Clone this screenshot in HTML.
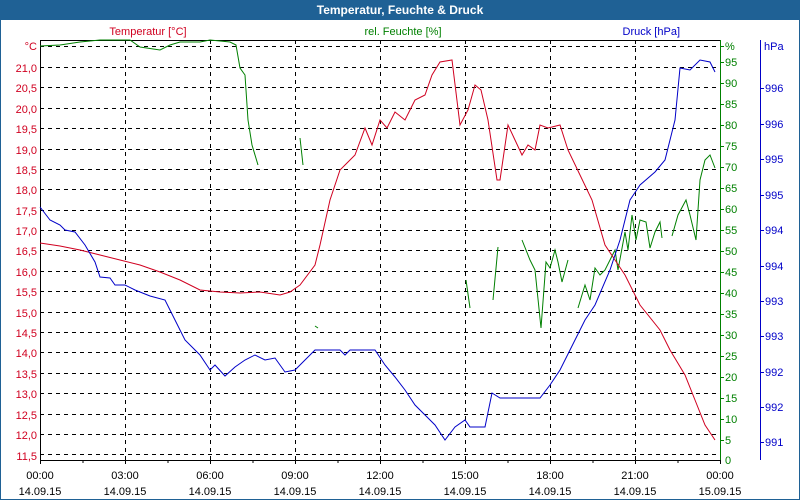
<!DOCTYPE html>
<html><head><meta charset="utf-8"><style>
body{margin:0;background:#fff;width:800px;height:500px;overflow:hidden}
svg{display:block;font-family:"Liberation Sans",sans-serif;font-size:11px}
</style></head><body>
<svg width="800" height="500" viewBox="0 0 800 500">
<rect x="0" y="0" width="800" height="500" fill="#fff"/>
<rect x="0" y="0" width="800" height="20" fill="#1f6195"/>
<rect x="0" y="0" width="1" height="500" fill="#1f6195"/>
<rect x="799" y="0" width="1" height="500" fill="#1f6195"/>
<rect x="0" y="499" width="800" height="1" fill="#1f6195"/>
<text x="400" y="14" text-anchor="middle" fill="#fff" font-weight="bold" font-size="12">Temperatur, Feuchte &amp; Druck</text>
<text x="148" y="35" text-anchor="middle" fill="#d00020">Temperatur [°C]</text>
<text x="403" y="35" text-anchor="middle" fill="#008000">rel. Feuchte [%]</text>
<text x="680" y="35" text-anchor="end" fill="#0000c8">Druck [hPa]</text>
<g stroke="#000" stroke-width="1" stroke-dasharray="4,4" fill="none">
<path d="M40 46.5H720M40 67.5H720M40 87.5H720M40 108.5H720M40 128.5H720M40 149.5H720M40 169.5H720M40 189.5H720M40 210.5H720M40 230.5H720M40 250.5H720M40 271.5H720M40 291.5H720M40 312.5H720M40 332.5H720M40 352.5H720M40 373.5H720M40 393.5H720M40 414.5H720M40 434.5H720M40 454.5H720"/>
<path d="M125.5 40V460M210.5 40V460M295.5 40V460M380.5 40V460M465.5 40V460M550.5 40V460M635.5 40V460"/>
</g>
<g stroke="#000" fill="none">
<path d="M40.5 40V460M40 40.5H720M40 460.5H720"/>
<path d="M40.5 460v4M83 460v3M125.5 460v4M168 460v3M210.5 460v4M253 460v3M295.5 460v4M338 460v3M380.5 460v4M423 460v3M465.5 460v4M508 460v3M550.5 460v4M593 460v3M635.5 460v4M678 460v3M720.5 460v4"/>
</g>
<path d="M720.5 40V460" stroke="#008000"/>
<path d="M720 46.5h4M720 62.5h4M720 83.5h4M720 104.5h4M720 125.5h4M720 146.5h4M720 167.5h4M720 188.5h4M720 209.5h4M720 230.5h4M720 251.5h4M720 272.5h4M720 293.5h4M720 314.5h4M720 335.5h4M720 356.5h4M720 377.5h4M720 398.5h4M720 419.5h4M720 440.5h4" stroke="#008000"/>
<path d="M760.5 40V460M760 88.5h4M760 124.5h4M760 159.5h4M760 195.5h4M760 230.5h4M760 266.5h4M760 301.5h4M760 336.5h4M760 372.5h4M760 407.5h4M760 442.5h4" stroke="#0000c8"/>
<g fill="#d00020" text-anchor="end">
<text x="37" y="50">°C</text><text x="37" y="72">21,0</text><text x="37" y="92">20,5</text><text x="37" y="113">20,0</text><text x="37" y="133">19,5</text><text x="37" y="154">19,0</text><text x="37" y="174">18,5</text><text x="37" y="194">18,0</text><text x="37" y="215">17,5</text><text x="37" y="235">17,0</text><text x="37" y="255">16,5</text><text x="37" y="276">16,0</text><text x="37" y="296">15,5</text><text x="37" y="317">15,0</text><text x="37" y="337">14,5</text><text x="37" y="357">14,0</text><text x="37" y="378">13,5</text><text x="37" y="398">13,0</text><text x="37" y="419">12,5</text><text x="37" y="439">12,0</text><text x="37" y="460">11,5</text>
</g>
<g fill="#008000">
<text x="725" y="50">%</text><text x="725" y="66">95</text><text x="725" y="87">90</text><text x="725" y="108">85</text><text x="725" y="129">80</text><text x="725" y="150">75</text><text x="725" y="171">70</text><text x="725" y="192">65</text><text x="725" y="213">60</text><text x="725" y="234">55</text><text x="725" y="255">50</text><text x="725" y="276">45</text><text x="725" y="297">40</text><text x="725" y="318">35</text><text x="725" y="339">30</text><text x="725" y="360">25</text><text x="725" y="381">20</text><text x="725" y="402">15</text><text x="725" y="423">10</text><text x="725" y="444">5</text><text x="725" y="464">0</text>
</g>
<g fill="#0000c8">
<text x="764" y="50">hPa</text><text x="765" y="92">996</text><text x="765" y="128">996</text><text x="765" y="163">995</text><text x="765" y="199">995</text><text x="765" y="234">994</text><text x="765" y="270">994</text><text x="765" y="305">993</text><text x="765" y="340">993</text><text x="765" y="376">992</text><text x="765" y="411">992</text><text x="765" y="446">991</text>
</g>
<g fill="#000" text-anchor="middle">
<text x="40" y="479">00:00</text><text x="125" y="479">03:00</text><text x="210" y="479">06:00</text><text x="295" y="479">09:00</text><text x="380" y="479">12:00</text><text x="465" y="479">15:00</text><text x="550" y="479">18:00</text><text x="635" y="479">21:00</text><text x="720" y="479">00:00</text>
<text x="40" y="495">14.09.15</text><text x="125" y="495">14.09.15</text><text x="210" y="495">14.09.15</text><text x="295" y="495">14.09.15</text><text x="380" y="495">14.09.15</text><text x="465" y="495">14.09.15</text><text x="550" y="495">14.09.15</text><text x="635" y="495">14.09.15</text><text x="720" y="495">15.09.15</text>
</g>
<g fill="none" stroke-width="1">
<polyline stroke="#008000" points="40,46 60,45 80,42 100,40 130,40 140,47 160,50 170,45 180,42 200,42 210,40 230,42 236,45 240,68 245,75 248,120 252,145 258,165"/>
<polyline stroke="#008000" points="300,138 303,165"/>
<polyline stroke="#008000" points="315,326 318,328"/>
<polyline stroke="#008000" points="466,280 470,308"/>
<polyline stroke="#008000" points="493,300 498,247"/>
<polyline stroke="#008000" points="522,240 530,260 535,270 541,328 546,262 550,268 555,250 558,262 562,282 568,260"/>
<polyline stroke="#008000" points="578,308 585,285 590,300 595,268 600,275 605,270 610,260 615,250 618,270 625,232 628,250 632,215 636,240 640,220 646,222 650,248 655,232 660,222 662,238"/>
<polyline stroke="#008000" points="672,236 678,215 686,200 690,215 696,240 700,180 705,160 710,155 715,168"/>
<polyline stroke="#d00020" points="40,243 60,246 80,250 100,255 120,260 140,265 160,272 180,280 200,290 220,292 240,293 260,292 280,295 290,292 300,285 315,265 320,245 330,200 340,170 350,160 355,155 365,128 372,145 380,120 387,128 395,112 405,120 415,100 425,95 432,75 440,62 452,60 460,125 468,110 475,85 481,90 488,120 497,180 500,180 508,125 515,140 522,155 528,145 535,150 540,125 548,128 560,125 568,150 580,175 592,200 605,245 615,260 625,275 640,305 660,330 670,350 685,375 695,400 705,425 715,440"/>
<polyline stroke="#0000c8" points="40,207 50,220 60,225 65,230 75,232 85,245 95,262 100,277 110,278 115,285 125,285 135,290 150,296 165,300 175,320 185,340 200,355 210,370 215,365 225,376 235,367 245,360 255,355 265,360 275,358 285,372 295,370 305,360 315,350 340,350 345,355 350,350 375,350 385,365 395,377 405,390 415,405 425,415 435,425 445,440 455,427 465,420 470,427 485,427 492,393 500,398 540,398 550,385 560,370 575,340 585,320 595,305 610,270 620,240 630,200 640,185 655,172 665,160 675,120 680,68 690,70 700,60 710,62 715,72"/>
</g>
</svg>
</body></html>
